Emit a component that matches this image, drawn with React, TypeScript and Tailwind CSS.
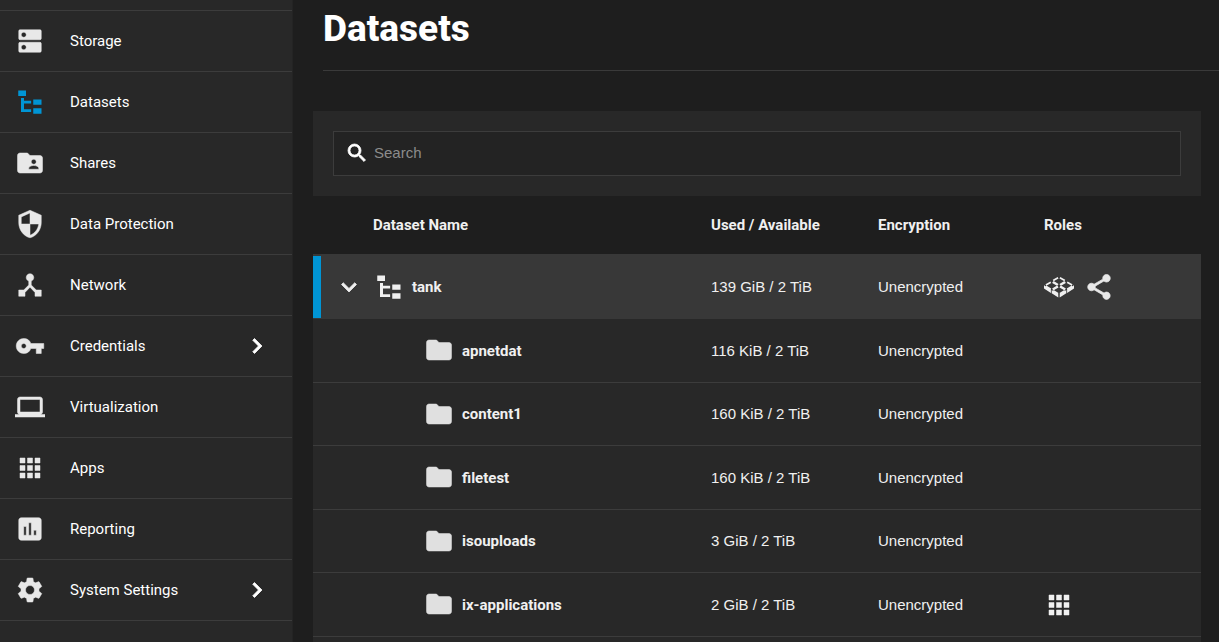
import type { ComponentType } from "react";
import {
  MdApps,
  MdAssessment,
  MdChevronRight,
  MdDeviceHub,
  MdDns,
  MdExpandMore,
  MdFolder,
  MdFolderShared,
  MdLaptop,
  MdSearch,
  MdSecurity,
  MdSettings,
  MdShare,
  MdVpnKey,
} from "react-icons/md";

type Icon = ComponentType<{ className?: string }>;

function TreeIcon({ className }: { className?: string }) {
  return (
    <svg viewBox="0 0 24 24" fill="currentColor" className={className} aria-hidden="true">
      <path d="M2.6 2.8h6.2v4.4H2.6V2.8m12 7.1h6.6v4.3h-6.6V9.9m0 7.1h6.6v4.3h-6.6V17m-1.7-3.8H7.2v4.5h5.7v2.3H4.8V8.8h2.4v2.2h5.7v2.2Z" />
    </svg>
  );
}

/* Four isometric tiles, each an open diamond, over a raised base. */
const tiles = [
  [15, 9.2],
  [7.7, 13.7],
  [22.3, 13.7],
  [15, 18.2],
];

function PoolIcon({ className }: { className?: string }) {
  return (
    <svg viewBox="0 0 30 30" fill="none" stroke="currentColor" className={className} aria-hidden="true">
      {tiles.map(([x, y]) => (
        <path
          key={`${x}-${y}`}
          transform={`translate(${x} ${y})`}
          strokeWidth="1.7"
          d="M-5.8-.6-.9-3.5M.9-3.5 5.8-.6M5.8.6.9 3.5M-.9 3.500-5.8.6"
        />
      ))}
      <path
        fill="currentColor"
        stroke="none"
        d="M0 14.2 6.9 18.6v3.400L0 17.600ZM7.700 19.100l6.600 4.100v3.400l-6.600-4.300ZM30 14.200l-6.900 4.400v3.400L30 17.600ZM22.300 19.100l-6.600 4.100v3.400l6.600-4.300Z"
        transform="translate(0 -1)"
      />
    </svg>
  );
}

const navItems: { label: string; icon: Icon; active?: boolean; expandable?: boolean }[] = [
  { label: "Storage", icon: MdDns },
  { label: "Datasets", icon: TreeIcon, active: true },
  { label: "Shares", icon: MdFolderShared },
  { label: "Data Protection", icon: MdSecurity },
  { label: "Network", icon: MdDeviceHub },
  { label: "Credentials", icon: MdVpnKey, expandable: true },
  { label: "Virtualization", icon: MdLaptop },
  { label: "Apps", icon: MdApps },
  { label: "Reporting", icon: MdAssessment },
  { label: "System Settings", icon: MdSettings, expandable: true },
];

const datasets: { name: string; usage: string; apps?: boolean }[] = [
  { name: "apnetdat", usage: "116 KiB / 2 TiB" },
  { name: "content1", usage: "160 KiB / 2 TiB" },
  { name: "filetest", usage: "160 KiB / 2 TiB" },
  { name: "isouploads", usage: "3 GiB / 2 TiB" },
  { name: "ix-applications", usage: "2 GiB / 2 TiB", apps: true },
];

function Sidebar() {
  return (
    <nav className="w-[293px] shrink-0 border-r border-[#242424] bg-[#282828] font-['Roboto',sans-serif] text-[15px]">
      <div className="h-[11px] border-b border-[#3c3c3c]" />
      <ul>
        {navItems.map(({ label, icon: ItemIcon, active, expandable }) => (
          <li key={label} className="border-b border-[#3c3c3c]">
            <a href="#" className="flex h-[60px] items-center pr-5 pl-[15px] text-white">
              <ItemIcon
                className={
                  active
                    ? "size-[30px] text-[#0095d5]"
                    : "size-[30px] text-[#e8e8e8] [stroke-width:0.4]"
                }
              />
              <span className="ml-[25px] grow">{label}</span>
              {expandable && <MdChevronRight className="size-[30px] [stroke-width:0.6]" />}
            </a>
          </li>
        ))}
      </ul>
    </nav>
  );
}

function DatasetTable() {
  return (
    <table className="w-full table-fixed border-separate border-spacing-0 text-left text-[15px] text-[#f0f0f0]">
      <thead className="font-['Roboto',sans-serif]">
        <tr className="h-[58px]">
          <th className="pl-[60px] font-bold">Dataset Name</th>
          <th className="w-[167px] font-bold">Used / Available</th>
          <th className="w-[166px] font-bold">Encryption</th>
          <th className="w-[157px] font-bold">Roles</th>
        </tr>
      </thead>
      <tbody>
        <tr className="h-[65px] bg-[#383838]">
          <td>
            <div className="flex items-center">
              <span className="h-[62px] w-2 bg-[#0095d5]" />
              <button type="button" aria-label="Collapse tank" className="ml-[13px]">
                <MdExpandMore className="size-[30px] [stroke-width:0.6]" />
              </button>
              <TreeIcon className="ml-[10px] size-[30px]" />
              <span className="ml-2 pt-px font-['Roboto',sans-serif] font-bold">tank</span>
            </div>
          </td>
          <td className="pt-px">139 GiB / 2 TiB</td>
          <td className="pt-px">Unencrypted</td>
          <td>
            <div className="flex items-center gap-[10px]">
              <PoolIcon className="size-[30px]" />
              <MdShare className="size-[30px] text-[#e8e8e8] [stroke-width:0.6]" />
            </div>
          </td>
        </tr>
        {datasets.map(({ name, usage, apps }) => (
          <tr key={name} className="h-[63px] bg-[#282828] *:border-b *:border-[#3c3c3c] even:h-[64px]">
            <td>
              <div className="flex items-center pl-[111px]">
                <MdFolder className="mb-px size-[30px] text-[#e0e0e0] [stroke-width:0.4]" />
                <span className="ml-2 pt-px font-['Roboto',sans-serif] font-bold">{name}</span>
              </div>
            </td>
            <td className="pt-px">{usage}</td>
            <td className="pt-px">Unencrypted</td>
            <td>{apps && <MdApps className="size-[30px] [stroke-width:0.4]" />}</td>
          </tr>
        ))}
      </tbody>
    </table>
  );
}

export default function App() {
  return (
    <div className="flex min-h-screen bg-[#1e1e1e] font-['Liberation_Sans',sans-serif] text-white [&_path[fill=none]]:stroke-none">
      <Sidebar />
      <main className="flex min-w-0 grow flex-col pl-5">
        <header className="ml-[10px] h-[71px] border-b border-[#3a3a3a] pt-[9px]">
          <h1 className="font-['Roboto',sans-serif] text-[37px] leading-[40px] font-extrabold">Datasets</h1>
        </header>
        <div className="mt-10 mr-[18px] flex grow flex-col">
          <div className="bg-[#282828] p-5">
            <label className="flex h-[45px] items-center border border-[#3c3c3c] bg-[#232323] pb-px pl-[11px]">
              <MdSearch className="size-[24px] [stroke-width:0.8]" />
              <input
                type="search"
                aria-label="Search"
                placeholder="Search"
                className="ml-[5px] min-w-0 grow bg-transparent text-[15px] outline-none placeholder:text-[#8c8c8c]"
              />
            </label>
          </div>
          <DatasetTable />
          <div className="grow bg-[#282828]" />
        </div>
      </main>
    </div>
  );
}
